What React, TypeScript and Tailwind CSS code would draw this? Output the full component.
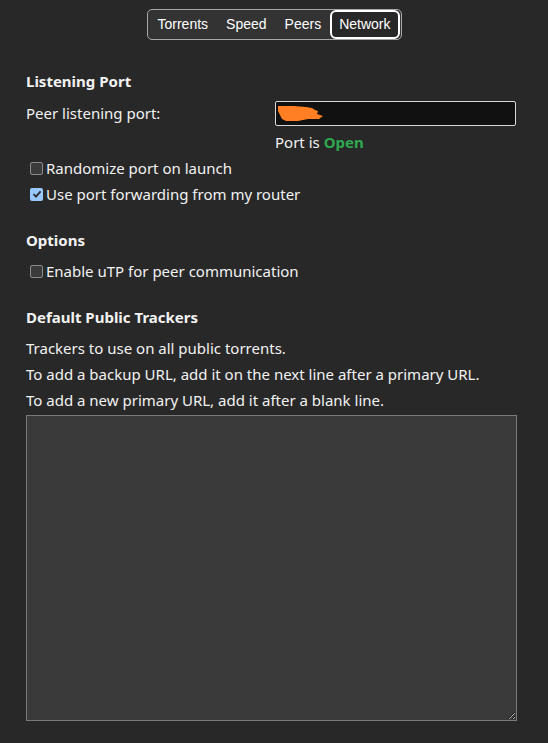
const tabs = ["Torrents", "Speed", "Peers", "Network"];

const Check = ({ checked, label }: { checked?: boolean; label: string }) => (
  <label className="flex items-center h-[26px]">
    {checked ? (
      <span className="w-[13px] h-[13px] rounded-[2px] bg-[#99c8ff] flex items-center justify-center ml-[4px] mr-[3px]">
        <svg width="10" height="10" viewBox="0 0 10 10">
          <path d="M1.5 5.2 L4 7.6 L8.6 2.4" stroke="#2a2a2a" strokeWidth="1.8" fill="none" />
        </svg>
      </span>
    ) : (
      <span className="w-[13px] h-[13px] rounded-[2px] border border-[#8a8a8a] bg-[#3b3b3b] ml-[4px] mr-[3px]" />
    )}
    <span>{label}</span>
  </label>
);

export default function App() {
  return (
    <div
      className="min-h-screen bg-[#282828] text-[#f2f2f2] text-[15px]"
      style={{ fontFamily: "'Noto Sans', 'Open Sans', sans-serif" }}
    >
      {/* Tabs */}
      <div className="flex justify-center pt-[9px]">
        <div
          className="flex items-center h-[31px] rounded-[5px] border border-[#a8a8a8] bg-[#333333] px-[1px] text-[14px] text-white"
          style={{ fontFamily: "'Liberation Sans', Arial, sans-serif" }}
        >
          {tabs.map((t) => (
            <div
              key={t}
              className={
                t === "Network"
                  ? "h-[29px] px-[7px] flex items-center rounded-[6px] border-2 border-white bg-[#282828]"
                  : "h-[29px] px-[9px] flex items-center"
              }
            >
              {t}
            </div>
          ))}
        </div>
      </div>

      <div className="px-[26px] pt-[28px]">
        <h2 className="font-bold h-[26px] leading-[26px]">Listening Port</h2>
        <div className="flex items-center h-[30px] mt-[4px]">
          <span className="w-[249px]">Peer listening port:</span>
          <div className="w-[241px] h-[25px] bg-[#111111] border border-[#d8d8d8] rounded-[2px] flex items-center pl-[2px]">
            <svg width="46" height="15" viewBox="0 0 46 15">
              <path
                d="M0 0 L16 0 L28 1 L34 2 L37 4 L40 5 L39 8 L45 10 L41 13 L30 13 L20 15 L8 15 L4 13 L2 9 L0 5 Z"
                fill="#ff7f22"
              />
            </svg>
          </div>
        </div>
        <div className="pl-[249px] h-[26px] leading-[26px] mt-[1px]">
          Port is <span className="font-bold text-[#2fa84f]">Open</span>
        </div>
        <Check label="Randomize port on launch" />
        <Check checked label="Use port forwarding from my router" />

        <h2 className="font-bold h-[26px] leading-[26px] mt-[20px]">Options</h2>
        <div className="mt-[5px]">
          <Check label="Enable uTP for peer communication" />
        </div>

        <h2 className="font-bold h-[26px] leading-[26px] mt-[20px]">Default Public Trackers</h2>
        <p className="leading-[26px] mt-[5px]">Trackers to use on all public torrents.</p>
        <p className="leading-[26px]">To add a backup URL, add it on the next line after a primary URL.</p>
        <p className="leading-[26px]">To add a new primary URL, add it after a blank line.</p>
        <textarea className="block w-[491px] h-[306px] mt-[2px] bg-[#3a3a3a] border border-[#7a7a7a] outline-none" />
      </div>
    </div>
  );
}
